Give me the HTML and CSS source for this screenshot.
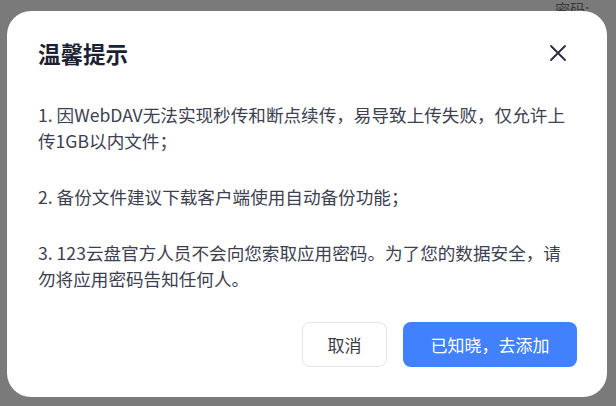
FILE: index.html
```html
<!DOCTYPE html>
<html lang="zh-CN">
<head>
<meta charset="utf-8">
<title>温馨提示</title>
<link rel="stylesheet" href="styles.css">
</head>
<body>
<div class="backdrop-text">密码:</div>
<div class="overlay">
  <div class="modal">
    <div class="modal-header">
      <h2 class="modal-title">温馨提示</h2>
      <button class="close-btn" aria-label="关闭">
        <svg width="18" height="18" viewBox="0 0 18 18" fill="none" stroke="#272a3c" stroke-width="1.8" stroke-linecap="round">
          <path d="M2 2 L16 16 M16 2 L2 16"/>
        </svg>
      </button>
    </div>
    <div class="modal-body">
      <p>1. 因WebDAV无法实现秒传和断点续传，易导致上传失败，仅允许上传1GB以内文件；</p>
      <p>2. 备份文件建议下载客户端使用自动备份功能；</p>
      <p>3. 123云盘官方人员不会向您索取应用密码。为了您的数据安全，请勿将应用密码告知任何人。</p>
    </div>
    <div class="modal-footer">
      <button class="btn btn-default">取消</button>
      <button class="btn btn-primary">已知晓，去添加</button>
    </div>
  </div>
</div>
</body>
</html>
```
FILE: styles.css
```css
html, body {
  margin: 0;
  padding: 0;
  width: 616px;
  height: 406px;
  overflow: hidden;
}
body {
  background: #7a7a7a;
  font-family: "Noto Sans CJK SC", "Noto Sans", sans-serif;
  position: relative;
}
.backdrop-text {
  position: absolute;
  left: 555px;
  top: 0;
  font-size: 15px;
  line-height: 18px;
  color: #3a3a3a;
}
.overlay {
  position: relative;
  display: flex;
  padding: 11px 0 0 7px;
}
.modal {
  width: 600px;
  height: 386px;
  box-sizing: border-box;
  background: #fff;
  border-radius: 24px;
  padding: 30px 30px 30px 31px;
  display: flex;
  flex-direction: column;
}
.modal-header {
  display: flex;
  align-items: center;
  justify-content: space-between;
  height: 24px;
}
.modal-title {
  margin: 0;
  font-size: 22.5px;
  line-height: 24px;
  font-weight: 700;
  color: #1d1f33;
}
.close-btn {
  border: 0;
  background: none;
  padding: 0;
  width: 18px;
  height: 18px;
  margin-right: 10px;
  display: flex;
}
.modal-body {
  margin-top: 37px;
  flex: 1;
  font-size: 17.6px;
  line-height: 26px;
  color: #3d4050;
  padding-right: 6px;
}
.modal-body p {
  margin: 0 0 30px;
}
.modal-body p:last-child {
  margin-bottom: 0;
}
.modal-footer {
  display: flex;
  justify-content: flex-end;
  gap: 16px;
}
.btn {
  height: 45px;
  border-radius: 8px;
  font-family: inherit;
  font-size: 17px;
  box-sizing: border-box;
  padding: 0;
}
.btn-default {
  width: 85px;
  background: #fff;
  border: 1px solid #e3e4e8;
  color: #3a3a44;
}
.btn-primary {
  width: 174px;
  background: #4181fd;
  border: 0;
  color: #fff;
}
```
